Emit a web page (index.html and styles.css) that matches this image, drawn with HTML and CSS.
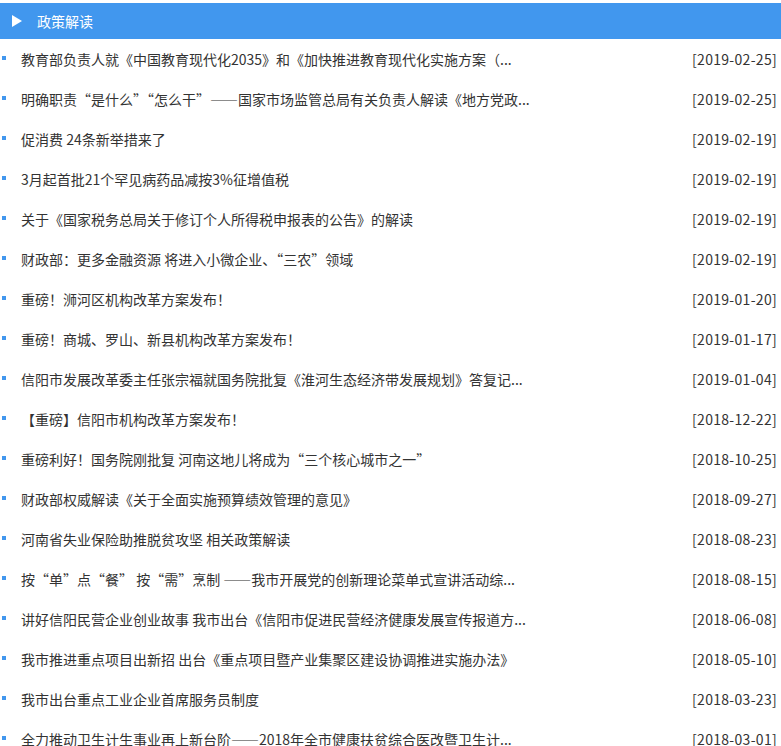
FILE: index.html
```html
<!DOCTYPE html>
<html lang="zh-CN">
<head>
    <meta charset="UTF-8">
    <title>政策解读</title>
    <link rel="stylesheet" href="styles.css">
</head>
<body>

    <div class="panel">
        <div class="panel-head">
            <span class="arrow"></span>
            <span class="panel-title">政策解读</span>
        </div>

        <ul class="news-list">
            <li><a href="#">教育部负责人就《中国教育现代化2035》和《加快推进教育现代化实施方案（...</a><span class="date">[2019-02-25]</span></li>
            <li><a href="#">明确职责“是什么”“怎么干”——国家市场监管总局有关负责人解读《地方党政...</a><span class="date">[2019-02-25]</span></li>
            <li><a href="#">促消费 24条新举措来了</a><span class="date">[2019-02-19]</span></li>
            <li><a href="#">3月起首批21个罕见病药品减按3%征增值税</a><span class="date">[2019-02-19]</span></li>
            <li><a href="#">关于《国家税务总局关于修订个人所得税申报表的公告》的解读</a><span class="date">[2019-02-19]</span></li>
            <li><a href="#">财政部：更多金融资源 将进入小微企业、“三农”领域</a><span class="date">[2019-02-19]</span></li>
            <li><a href="#">重磅！浉河区机构改革方案发布！</a><span class="date">[2019-01-20]</span></li>
            <li><a href="#">重磅！商城、罗山、新县机构改革方案发布！</a><span class="date">[2019-01-17]</span></li>
            <li><a href="#">信阳市发展改革委主任张宗福就国务院批复《淮河生态经济带发展规划》答复记...</a><span class="date">[2019-01-04]</span></li>
            <li><a href="#">【重磅】信阳市机构改革方案发布！</a><span class="date">[2018-12-22]</span></li>
            <li><a href="#">重磅利好！国务院刚批复 河南这地儿将成为“三个核心城市之一”</a><span class="date">[2018-10-25]</span></li>
            <li><a href="#">财政部权威解读《关于全面实施预算绩效管理的意见》</a><span class="date">[2018-09-27]</span></li>
            <li><a href="#">河南省失业保险助推脱贫攻坚 相关政策解读</a><span class="date">[2018-08-23]</span></li>
            <li><a href="#">按“单”点“餐” 按“需”烹制 ——我市开展党的创新理论菜单式宣讲活动综...</a><span class="date">[2018-08-15]</span></li>
            <li><a href="#">讲好信阳民营企业创业故事 我市出台《信阳市促进民营经济健康发展宣传报道方...</a><span class="date">[2018-06-08]</span></li>
            <li><a href="#">我市推进重点项目出新招 出台《重点项目暨产业集聚区建设协调推进实施办法》</a><span class="date">[2018-05-10]</span></li>
            <li><a href="#">我市出台重点工业企业首席服务员制度</a><span class="date">[2018-03-23]</span></li>
            <li><a href="#">全力推动卫生计生事业再上新台阶——2018年全市健康扶贫综合医改暨卫生计...</a><span class="date">[2018-03-01]</span></li>
        </ul>
    </div>

</body>
</html>
```

FILE: styles.css
```css
body {
    margin: 0;
    padding: 0;
    background: #ffffff;
    font-family: "Noto Sans CJK SC", "Microsoft YaHei", sans-serif;
    font-size: 14px;
    color: #333;
}

.panel {
    padding-top: 3px;
}

.panel-head {
    background: #4197ee;
    height: 36px;
    display: flex;
    align-items: center;
}

.arrow {
    width: 0;
    height: 0;
    border-top: 6px solid transparent;
    border-bottom: 6px solid transparent;
    border-left: 10px solid #ffffff;
    margin-left: 12px;
}

.panel-title {
    color: #ffffff;
    font-size: 14px;
    margin-left: 15px;
}

.news-list {
    list-style: none;
    margin: 0;
    padding: 0;
}

.news-list li {
    height: 40px;
    display: flex;
    align-items: center;
    justify-content: space-between;
    position: relative;
    padding-left: 21px;
    padding-right: 4px;
}

.news-list li::before {
    content: "";
    position: absolute;
    left: 2px;
    top: 17px;
    width: 4px;
    height: 4px;
    background: #4197ee;
}

.news-list a {
    color: #333;
    text-decoration: none;
    white-space: nowrap;
}

.news-list a:hover {
    color: #4197ee;
}

.date {
    color: #333;
    white-space: nowrap;
    letter-spacing: 0.3px;
}
```
